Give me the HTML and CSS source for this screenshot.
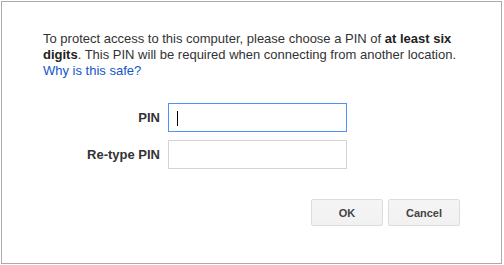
FILE: index.html
```html
<!DOCTYPE html>
<html>
<head>
<meta charset="utf-8">
<link rel="stylesheet" href="styles.css">
</head>
<body>
<div class="dialog">
  <p class="message">To protect access to this computer, please choose a PIN of <b>at least six</b><br><b>digits</b>. This PIN will be required when connecting from another location.<br><a class="link" href="#">Why is this safe?</a></p>
  <div class="form">
    <label class="label">PIN</label>
    <div class="field focused"><span class="caret"></span></div>
    <label class="label">Re-type PIN</label>
    <div class="field"></div>
  </div>
  <div class="buttons">
    <button class="btn">OK</button>
    <button class="btn">Cancel</button>
  </div>
</div>
</body>
</html>
```
FILE: styles.css
```css
html, body {
  margin: 0;
  padding: 0;
  background: #ffffff;
}
body {
  font-family: "Liberation Sans", Arial, sans-serif;
  font-size: 13px;
  color: #333333;
}
.dialog {
  box-sizing: border-box;
  margin: 1px 0 0 1px;
  width: 501px;
  height: 263px;
  border: 1px solid #ababab;
  padding: 29px 41px 0 41px;
  background: #ffffff;
}
.message {
  margin: 0;
  line-height: 16px;
  white-space: nowrap;
}
.message b {
  font-weight: bold;
  color: #222222;
}
.link {
  color: #1155cc;
  text-decoration: none;
}
.form {
  display: grid;
  grid-template-columns: 117px 179px;
  grid-auto-rows: 29px;
  column-gap: 8px;
  row-gap: 8px;
  margin-top: 24px;
  align-items: center;
}
.label {
  text-align: right;
  font-weight: bold;
  color: #333333;
}
.field {
  box-sizing: border-box;
  height: 29px;
  border: 1px solid #d3d3d3;
  background: #ffffff;
  padding: 6px 0 0 8px;
}
.field.focused {
  border-color: #4d90fe;
}
.caret {
  display: block;
  width: 1px;
  height: 15px;
  margin-top: 1px;
  background: #000000;
}
.buttons {
  display: flex;
  justify-content: flex-end;
  gap: 5px;
  margin-top: 30px;
}
.btn {
  box-sizing: border-box;
  width: 72px;
  height: 27px;
  border: 1px solid #dcdcdc;
  border-radius: 2px;
  background: linear-gradient(#f5f5f5, #f1f1f1);
  font-family: "Liberation Sans", Arial, sans-serif;
  font-size: 11px;
  font-weight: bold;
  color: #444444;
  padding: 0;
}
```
